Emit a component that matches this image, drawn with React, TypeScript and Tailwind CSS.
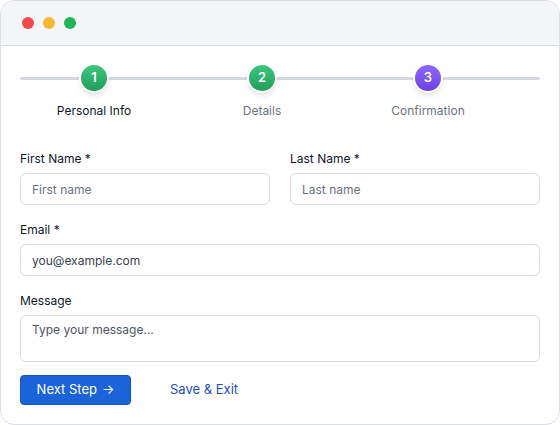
export default function App() {
  const steps = [
    { n: 1, label: "Personal Info", active: true, color: "bg-gradient-to-b from-[#3ec77f] to-[#1f9d59]" },
    { n: 2, label: "Details", active: false, color: "bg-gradient-to-b from-[#3ec77f] to-[#1f9d59]" },
    { n: 3, label: "Confirmation", active: false, color: "bg-gradient-to-b from-[#9067f5] to-[#6d3fe6]" },
  ];

  const inputCls =
    "h-[32px] rounded-[6px] border border-[#d8dbe1] px-[11px] text-[12px] outline-none";

  return (
    <div className="h-[425px] w-[560px] bg-white font-['Inter',sans-serif]">
      <div className="flex h-full w-full flex-col overflow-hidden rounded-[14px] border border-[#dcdee4] bg-white">
        <div className="flex h-[45px] shrink-0 items-center gap-[9px] border-b border-[#dcdee4] bg-[#f4f5f9] pl-[21px]">
          <span className="h-[12px] w-[12px] rounded-full bg-[#f04b4b]" />
          <span className="h-[12px] w-[12px] rounded-full bg-[#f7b731]" />
          <span className="h-[12px] w-[12px] rounded-full bg-[#1fb655]" />
        </div>

        <div className="px-[19px]">
          <div className="relative mt-[19px]">
            <div className="absolute left-0 right-0 top-[12px] h-[3px] rounded-full bg-[#d5d8df]" />
            <div className="relative flex pl-[24px]">
              {steps.map((s, i) => (
                <div key={s.n} className={`flex w-[100px] flex-col items-center ${i === 1 ? "ml-[68px]" : i === 2 ? "ml-[66px]" : ""}`}>
                  <div className={`flex h-[26px] w-[26px] items-center justify-center rounded-full ${s.color} text-[13px] font-semibold text-white shadow-[0_3px_6px_rgba(0,0,0,0.18)] ring-2 ring-white`}>
                    {s.n}
                  </div>
                  <span className={`mt-[11px] whitespace-nowrap text-[12px] leading-[18px] ${s.active ? "text-[#0f172a]" : "text-[#6b7280]"}`}>
                    {s.label}
                  </span>
                </div>
              ))}
            </div>
          </div>

          <form className="mt-[30px] flex flex-col gap-[16px] text-[12px]">
            <div className="grid grid-cols-2 gap-[20px]">
              <label className="flex flex-col gap-[5px]">
                <span className="leading-[18px] text-[#0f172a]">First Name *</span>
                <input placeholder="First name" className={`${inputCls} placeholder:text-[#6b7280]`} />
              </label>
              <label className="flex flex-col gap-[5px]">
                <span className="leading-[18px] text-[#0f172a]">Last Name *</span>
                <input placeholder="Last name" className={`${inputCls} placeholder:text-[#6b7280]`} />
              </label>
            </div>
            <label className="flex flex-col gap-[5px]">
              <span className="leading-[18px] text-[#0f172a]">Email *</span>
              <input placeholder="you@example.com" className={`${inputCls} placeholder:text-[#374151]`} />
            </label>
            <label className="flex flex-col gap-[5px]">
              <span className="leading-[18px] text-[#0f172a]">Message</span>
              <textarea placeholder="Type your message..." className="h-[47px] resize-none rounded-[6px] border border-[#d8dbe1] px-[11px] py-[5px] text-[12px] leading-[18px] outline-none placeholder:text-[#4b5563]" />
            </label>
            <div className="mt-[-3px] flex items-center gap-[39px]">
              <button type="button" className="flex h-[30px] w-[111px] items-center justify-center gap-[5px] rounded-[4px] border border-[#1654bd] bg-[#1b63d8] text-[13px] text-white">
                Next Step <span className="text-[13px]">→</span>
              </button>
              <button type="button" className="text-[13px] text-[#1d4fc4]">
                Save &amp; Exit
              </button>
            </div>
          </form>
        </div>
      </div>
    </div>
  );
}
